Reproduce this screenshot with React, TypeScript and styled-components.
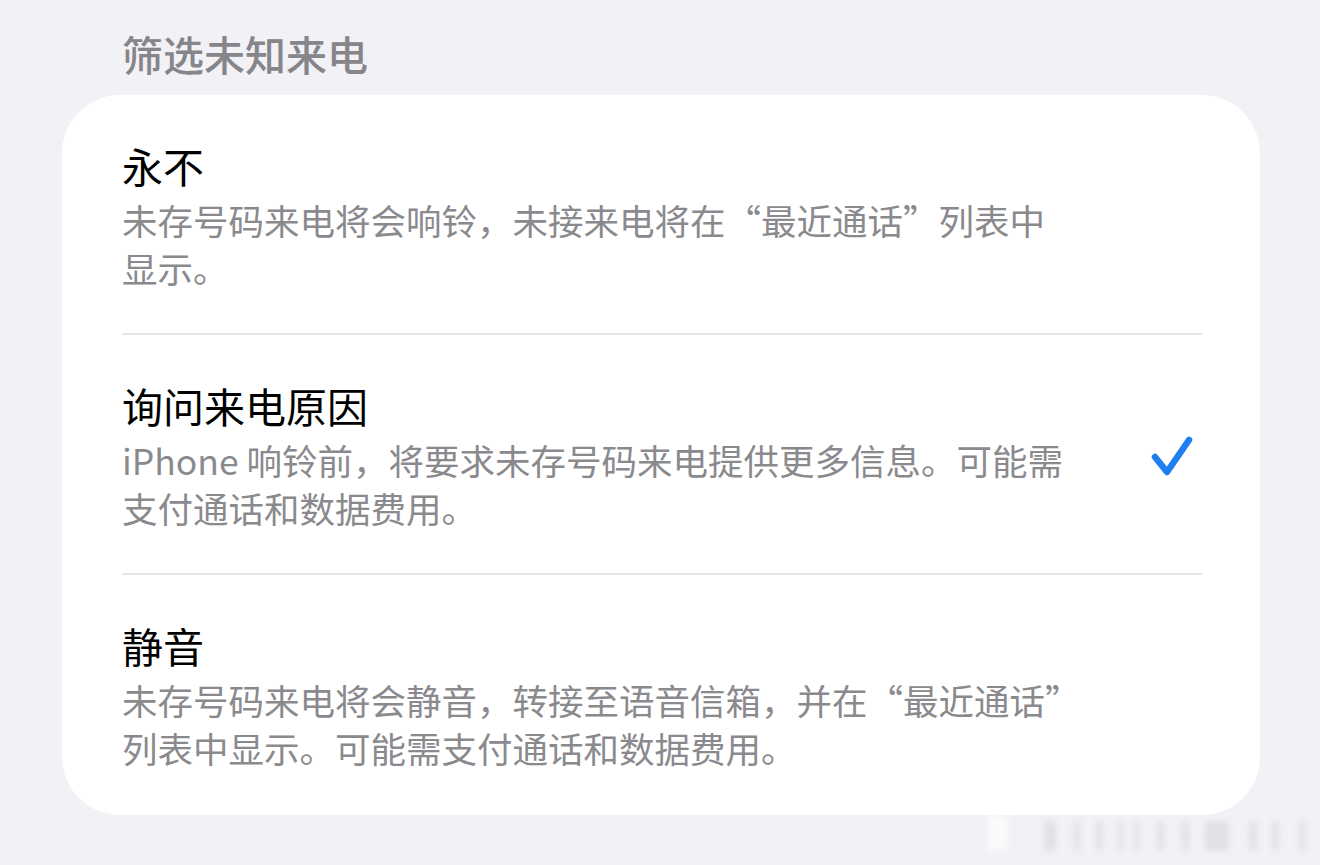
import React from "react";
import styled, { createGlobalStyle } from "styled-components";

const GlobalStyle = createGlobalStyle`
  html, body {
    margin: 0;
    padding: 0;
    background: #f1f1f6;
  }
  body {
    font-family: "Noto Sans CJK SC", "Noto Sans", "Liberation Sans", sans-serif;
    -webkit-font-smoothing: antialiased;
  }
`;

const Page = styled.main`
  position: relative;
  width: 1320px;
  height: 865px;
  overflow: hidden;
  box-sizing: border-box;
  padding: 28px 60px 0 62px;
  background: #f1f1f6;
`;

const SectionHeader = styled.h2`
  margin: 0 0 17px;
  padding-left: 60px;
  font-size: 41px;
  line-height: 50px;
  font-weight: 500;
  color: #85858a;
`;

const Card = styled.section`
  background: #ffffff;
  border-radius: 58px;
  padding: 0 58px 0 60px;
`;

const Row = styled.div<{ $last?: boolean }>`
  display: flex;
  align-items: center;
  padding: 45px 0 ${(p) => (p.$last ? 43 : 41)}px;
  border-bottom: ${(p) => (p.$last ? "none" : "2px solid #e4e4e7")};
`;

const RowText = styled.div`
  flex: 1;
  display: flex;
  flex-direction: column;
  gap: 6px;
`;

const Title = styled.div`
  font-size: 41px;
  line-height: 50px;
  color: #000000;
`;

const Description = styled.p`
  margin: 0;
  font-size: 35.5px;
  line-height: 48px;
  color: #8a8a8e;
`;

const Line = styled.span`
  display: block;
  white-space: nowrap;
`;

const Check = styled.svg`
  flex: none;
  width: 52px;
  height: 48px;
`;

const Watermark = styled.div`
  position: absolute;
  left: 988px;
  top: 815px;
  display: flex;
  align-items: flex-end;
  filter: blur(3px);
  opacity: 0.7;
`;

const Bar = styled.span<{ $w: number; $h: number; $ml: number; $light?: boolean }>`
  display: block;
  width: ${(p) => p.$w}px;
  height: ${(p) => p.$h}px;
  margin-left: ${(p) => p.$ml}px;
  border-radius: 4px;
  background: ${(p) => (p.$light ? "#ffffff" : "#d9d9de")};
`;

type Option = {
  title: string;
  lines: string[];
  selected?: boolean;
};

const options: Option[] = [
  {
    title: "永不",
    lines: ["未存号码来电将会响铃，未接来电将在“最近通话”列表中", "显示。"],
  },
  {
    title: "询问来电原因",
    lines: ["iPhone 响铃前，将要求未存号码来电提供更多信息。可能需", "支付通话和数据费用。"],
    selected: true,
  },
  {
    title: "静音",
    lines: ["未存号码来电将会静音，转接至语音信箱，并在“最近通话”", "列表中显示。可能需支付通话和数据费用。"],
  },
];

const bars: { w: number; h: number; ml: number; light?: boolean }[] = [
  { w: 20, h: 36, ml: 0, light: true },
  { w: 12, h: 30, ml: 36 },
  { w: 6, h: 30, ml: 18 },
  { w: 7, h: 30, ml: 16 },
  { w: 5, h: 30, ml: 16 },
  { w: 5, h: 30, ml: 10 },
  { w: 7, h: 30, ml: 18 },
  { w: 7, h: 30, ml: 18 },
  { w: 24, h: 30, ml: 16 },
  { w: 8, h: 30, ml: 20 },
  { w: 7, h: 30, ml: 15 },
  { w: 6, h: 30, ml: 20 },
];

export default function App() {
  return (
    <>
      <GlobalStyle />
      <Page lang="zh-CN">
        <SectionHeader>筛选未知来电</SectionHeader>
        <Card>
          {options.map((o, i) => (
            <Row key={o.title} $last={i === options.length - 1}>
              <RowText>
                <Title>{o.title}</Title>
                <Description>
                  {o.lines.map((l) => (
                    <Line key={l}>{l}</Line>
                  ))}
                </Description>
              </RowText>
              {o.selected && (
                <Check viewBox="0 0 52 48" aria-label="已选择">
                  <path
                    d="M5 25 L17 40 L39 8"
                    fill="none"
                    stroke="#1f7ef0"
                    strokeWidth={6.5}
                    strokeLinecap="round"
                    strokeLinejoin="round"
                  />
                </Check>
              )}
            </Row>
          ))}
        </Card>
        <Watermark aria-hidden>
          {bars.map((b, i) => (
            <Bar key={i} $w={b.w} $h={b.h} $ml={b.ml} $light={b.light} />
          ))}
        </Watermark>
      </Page>
    </>
  );
}
